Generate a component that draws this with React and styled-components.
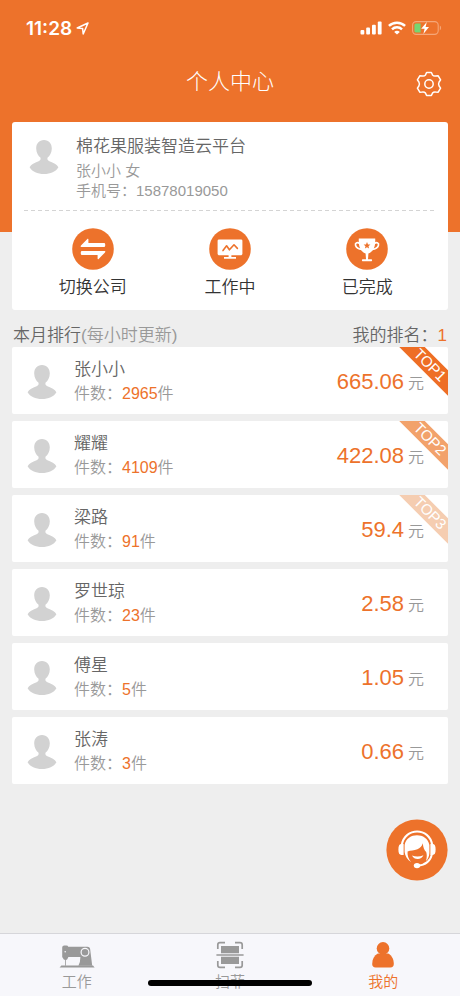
import React from "react";
import styled, { createGlobalStyle } from "styled-components";

const orange = "#ed722b";

const GlobalStyle = createGlobalStyle`
    * {
        box-sizing: border-box;
    }
    body {
        margin: 0;
        background: #eeeeee;
        font-family: "Liberation Sans", "Noto Sans CJK SC", sans-serif;
        font-weight: 350;
    }
    button {
        border: 0;
        padding: 0;
        background: none;
        font: inherit;
        color: inherit;
        cursor: pointer;
    }
    h1, h2, h3, p, ul {
        margin: 0;
        padding: 0;
        font-size: inherit;
        font-weight: inherit;
    }
    svg {
        display: block;
    }
`;

const Page = styled.div`
    display: flex;
    flex-direction: column;
    min-height: 100vh;
`;

const Header = styled.header`
    height: 232px;
    background: ${orange};
    color: #fff;
`;

const StatusBar = styled.div`
    display: flex;
    align-items: center;
    justify-content: space-between;
    height: 56px;
    padding: 0 18px 0 26px;
`;

const StatusGroup = styled.div`
    display: flex;
    align-items: center;
    gap: ${props => props.$gap}px;
`;

const Clock = styled.span`
    font-family: Inter, sans-serif;
    font-size: 19px;
    font-weight: 600;
`;

const TitleBar = styled.div`
    display: grid;
    grid-template-columns: 1fr auto 1fr;
    align-items: center;
    height: 52px;
    padding: 0 18px;
`;

const Title = styled.h1`
    grid-column: 2;
    font-size: 22px;
    font-weight: 300;
    line-height: 32px;
`;

const SettingsButton = styled.button`
    justify-self: end;
    padding-top: 4px;
`;

const Main = styled.main`
    flex: 1;
    margin-top: -110px;
    padding: 0 12px 24px;
`;

const Card = styled.section`
    padding: 13px 12px 10px;
    background: #fff;
    border-radius: 3px;
`;

const Profile = styled.div`
    display: flex;
    gap: 17px;
    padding: 0 5px 9px;

    svg {
        margin-top: 5px;
    }
`;

const Company = styled.h2`
    margin-bottom: 2px;
    font-size: 17px;
    line-height: 24px;
    color: #666;
`;

const Detail = styled.p`
    font-size: 15px;
    line-height: 20px;
    color: #999;
`;

const Divider = styled.div`
    height: 1px;
    background: repeating-linear-gradient(90deg, #d4d4d4 0 4px, transparent 4px 7px);
`;

const Actions = styled.div`
    display: grid;
    grid-template-columns: repeat(3, 1fr);
    padding-top: 17px;
`;

const ActionButton = styled.button`
    display: flex;
    flex-direction: column;
    align-items: center;
    gap: 6px;
    font-size: 17px;
    line-height: 24px;
    color: #333;
`;

const RankHeader = styled.div`
    display: flex;
    justify-content: space-between;
    padding: 15px 1px 0;
    font-size: 17px;
    line-height: 22px;
    color: #666;
`;

const Muted = styled.span`
    color: #999;
`;

const Accent = styled.span`
    color: ${orange};
`;

const RankList = styled.ul`
    display: flex;
    flex-direction: column;
    gap: 7px;
    list-style: none;
`;

const RankRow = styled.li`
    position: relative;
    display: flex;
    align-items: center;
    gap: 17px;
    padding: 11px 24px 8px 15px;
    overflow: hidden;
    background: #fff;
    border-radius: 2px;
`;

const Person = styled.div`
    flex: 1;
    line-height: 24px;
`;

const Name = styled.h3`
    font-size: 17px;
    color: #666;
`;

const Count = styled.p`
    font-size: 16px;
    color: #999;
`;

const Amount = styled.div`
    display: flex;
    align-items: baseline;
    gap: 4px;
    font-size: 16px;
    color: #999;

    strong {
        font-size: 22px;
        font-weight: inherit;
        color: ${orange};
    }
`;

const Ribbon = styled.span`
    position: absolute;
    top: 9px;
    right: -27px;
    width: 90px;
    height: 18px;
    font-size: 15px;
    line-height: 18px;
    text-align: center;
    color: #fff;
    background: ${props => props.color};
    transform: rotate(45deg);
`;

const SupportButton = styled.button`
    position: fixed;
    right: 12px;
    bottom: 115px;
`;

const TabBar = styled.nav`
    position: sticky;
    bottom: 0;
    display: grid;
    grid-template-columns: repeat(3, 1fr);
    padding: 7px 0 4px;
    border-top: 1px solid #d6d6da;
    background: #f7f7fb;
`;

const Tab = styled.a`
    display: flex;
    flex-direction: column;
    align-items: center;
    gap: 3px;
    font-size: 15px;
    line-height: 20px;
    text-decoration: none;
    color: ${props => (props.$active ? orange : "#999")};
`;

const HomeIndicator = styled.div`
    position: absolute;
    bottom: 10px;
    left: 50%;
    width: 164px;
    height: 6px;
    border-radius: 3px;
    background: #000;
    transform: translateX(-50%);
`;

const LocationIcon = () => (
    <svg width="13" height="13" viewBox="0 0 13 13" fill="none" stroke="#fff" strokeWidth="1.5" strokeLinejoin="round">
        <path d="M12 1 L1.2 6 L6.6 6.4 L7.2 12 Z" />
    </svg>
);

const SignalIcon = () => (
    <svg width="22" height="14" viewBox="0 0 22 14" fill="#fff">
        <rect x="0.5" y="9" width="3.8" height="4.5" rx="1" />
        <rect x="6.2" y="6.6" width="3.8" height="6.9" rx="1" />
        <rect x="12" y="3.8" width="3.8" height="9.7" rx="1" />
        <rect x="17.8" y="0.6" width="3.8" height="12.9" rx="1" />
    </svg>
);

const WifiIcon = () => (
    <svg width="18" height="14" viewBox="0 0 18 14" fill="none" stroke="#fff" strokeWidth="2.5">
        <path d="M0.9 4.9 C5.4 0.6 12.6 0.6 17.1 4.9" />
        <path d="M4 8.3 C6.8 5.7 11.2 5.7 14 8.3" />
        <path d="M9 13.6 L6.2 10.9 C7.8 9.5 10.2 9.5 11.8 10.9 Z" fill="#fff" stroke="none" />
    </svg>
);

const BatteryIcon = () => (
    <svg width="30" height="14" viewBox="0 0 30 14">
        <rect x="0.6" y="0.6" width="25.6" height="12.8" rx="3.6" fill="none" stroke="#f5a678" strokeWidth="1.1" />
        <path d="M27.8 4.6 C29.6 5.4 29.6 8.6 27.8 9.4 Z" fill="#f5a678" />
        <path d="M4 2.4 H8.6 V11.6 H4 Q2.4 11.6 2.4 10 V4 Q2.4 2.4 4 2.4 Z" fill="#76d672" />
        <path d="M14.8 1 L9.2 7.8 H12.6 L11.4 13 L17 6 H13.6 Z" fill="#fff" />
    </svg>
);

const GearIcon = () => (
    <svg width="26" height="26" viewBox="0 0 26 26" fill="none" stroke="#fff" strokeWidth="1.5" strokeLinejoin="round">
        <path d="M10.6 1.5 H15.4 L16.5 3.9 Q17.8 5.4 19.6 5 L22.2 4.8 L24.6 8.9 L23.1 11 Q22 13 23.1 15 L24.6 17.1 L22.2 21.2 L19.6 21 Q17.8 20.6 16.5 22.1 L15.4 24.5 H10.6 L9.5 22.1 Q8.2 20.6 6.4 21 L3.8 21.2 L1.4 17.1 L2.9 15 Q4 13 2.9 11 L1.4 8.9 L3.8 4.8 L6.4 5 Q8.2 5.4 9.5 3.9 Z" />
        <circle cx="13" cy="13" r="4.2" />
    </svg>
);

const Avatar = () => (
    <svg width="30" height="34" viewBox="0 0 30 34" fill="#d2d2d2">
        <path d="M15 0 C20 0 22.8 3.6 22.8 8.4 C22.8 12.6 20.6 16 18.6 17.6 C18 19.4 18.6 20.6 20.4 21.2 C24.6 22.6 27.8 24.4 29.4 27.2 C27 31.6 21.4 34 15 34 C8.6 34 3 31.6 0.6 27.2 C2.2 24.4 5.4 22.6 9.6 21.2 C11.4 20.6 12 19.4 11.4 17.6 C9.4 16 7.2 12.6 7.2 8.4 C7.2 3.6 10 0 15 0 Z" />
    </svg>
);

const SwitchIcon = () => (
    <svg width="42" height="42" viewBox="0 0 42 42">
        <circle cx="21" cy="21" r="20.8" fill={orange} />
        <path
            d="M15.6 10.8 Q16.4 10.4 16.4 11.4 V15 H32 Q33.2 15 33.2 16.2 V17.8 Q33.2 19 32 19 H9.4 Q8 18.8 9 17.6 Z M26.4 31.2 Q25.6 31.6 25.6 30.6 V27 H10 Q8.8 27 8.8 25.8 V24.2 Q8.8 23 10 23 H32.6 Q34 23.2 33 24.4 Z"
            fill="#fff"
        />
    </svg>
);

const MonitorIcon = () => (
    <svg width="42" height="42" viewBox="0 0 42 42">
        <circle cx="21" cy="21" r="20.8" fill={orange} />
        <rect x="8.6" y="11.4" width="24.8" height="15.8" rx="1.4" fill="#fff" />
        <path d="M19.6 27 H22.4 V29 H27 V30.8 H15 V29 H19.6 Z" fill="#fff" />
        <path
            d="M14 22.6 L17.6 17.8 L20.4 21.8 L25 16.8 L28.4 20.4"
            fill="none"
            stroke={orange}
            strokeWidth="1.6"
            strokeLinejoin="round"
            strokeLinecap="round"
        />
    </svg>
);

const TrophyIcon = () => (
    <svg width="42" height="42" viewBox="0 0 42 42">
        <circle cx="21" cy="21" r="20.8" fill={orange} />
        <path
            d="M12.8 10.4 H29.2 C29.6 18.4 28 23.4 22.4 25.6 L22 31.2 H25.6 Q26.6 32.2 25.6 33.2 H16.4 Q15.4 32.2 16.4 31.2 H20 L19.6 25.6 C14 23.4 12.4 18.4 12.8 10.4 Z"
            fill="#fff"
        />
        <path
            d="M13.8 15.6 C11 13.8 8.8 15 9.6 17.4 C10.4 20 12.8 21 16 21.4 M28.2 15.6 C31 13.8 33.2 15 32.4 17.4 C31.6 20 29.2 21 26 21.4"
            fill="none"
            stroke="#fff"
            strokeWidth="1.7"
        />
        <path
            d="M21 14 L22 16.4 L24.4 16.6 L22.5 18.2 L23.1 20.6 L21 19.3 L18.9 20.6 L19.5 18.2 L17.6 16.6 L20 16.4 Z"
            fill={orange}
        />
    </svg>
);

const HeadsetIcon = () => (
    <svg width="62" height="62" viewBox="0 0 62 62">
        <circle cx="31" cy="31" r="30.6" fill={orange} />
        <path d="M15.8 26 C18.6 8 43.6 8 46.2 26" fill="none" stroke="#fff" strokeWidth="2" />
        <path
            d="M18.6 26 C20.8 13 41.2 13 43.4 26 V34 C43.2 37.4 42 40.2 40 42 C41 38.4 41 35.4 40.2 33 C38.2 31.2 37.2 28.4 36.8 24.2 C35.8 27.4 34 29.2 31.4 30.2 C28 31.4 24.4 31.4 21.6 32.4 C21.2 36 22.4 39.6 25 43 C21.2 40.6 19 36.8 18.6 33 Z"
            fill="#fff"
        />
        <path d="M17.6 25 V36 H15.4 C13.4 36 12.4 34.4 12.4 30.6 C12.4 26.8 13.4 25 15.4 25 Z" fill="#fff" />
        <path d="M44.4 25 V36 H46.6 C48.6 36 49.6 34.4 49.6 30.6 C49.6 26.8 48.6 25 46.6 25 Z" fill="#fff" />
        <path d="M46 35 C44.6 42 39.6 46 31.6 46.6" fill="none" stroke="#fff" strokeWidth="1.8" />
        <ellipse cx="31" cy="46.6" rx="3.2" ry="2.6" fill="#fff" />
        <path d="M26 36.4 C29.4 37.8 33.8 37.8 37.4 36.2 C35.8 41 28 41.2 26 36.4 Z" fill="#fff" />
    </svg>
);

const SewingIcon = () => (
    <svg width="36" height="28" viewBox="0 0 36 28">
        <g fill="#999">
            <path d="M3.2 6.4 Q3.2 4.4 5.2 4.4 H7.4 Q9 4.4 9.2 5.8 H28.4 Q31 5.8 31.2 8.4 L33.2 24.8 H19.4 Q21.4 21.4 21.4 16 H9.4 L8 18.8 H7 V24.8 H6.2 V18.8 H5 L3.2 16 Z" />
            <path d="M2.4 24.6 H34 L35.6 26.6 H0.6 Z" />
        </g>
        <circle cx="6.2" cy="10.8" r="0.8" fill="#f7f7fb" />
        <circle cx="26" cy="11.2" r="3.9" fill="#999" stroke="#f7f7fb" strokeWidth="1.2" />
    </svg>
);

const ScanIcon = () => (
    <svg width="28" height="28" viewBox="0 0 28 28">
        <path
            d="M1.8 8 V3.8 Q1.8 1.6 4 1.6 H9 M19 1.6 H24 Q26.2 1.6 26.2 3.8 V8 M26.2 20 V24.2 Q26.2 26.4 24 26.4 H19 M9 26.4 H4 Q1.8 26.4 1.8 24.2 V20 M0.4 14 H27.6"
            fill="none"
            stroke="#999"
            strokeWidth="1.7"
        />
        <path d="M5 5 H23 V12.2 H5 Z M5 15.8 H23 V23 H5 Z" fill="#999" />
    </svg>
);

const UserIcon = () => (
    <svg width="28" height="28" viewBox="0 0 28 28" fill={orange}>
        <circle cx="14" cy="7.4" r="6.3" />
        <path d="M8.8 12.6 H19.2 C22.8 14.6 24.8 18.4 24.8 23 Q24.8 26.4 21.4 26.4 H6.6 Q3.2 26.4 3.2 23 C3.2 18.4 5.2 14.6 8.8 12.6 Z" />
    </svg>
);

const actions = [
    { label: "切换公司", Icon: SwitchIcon },
    { label: "工作中", Icon: MonitorIcon },
    { label: "已完成", Icon: TrophyIcon }
];

const ranking = [
    { name: "张小小", count: 2965, amount: "665.06" },
    { name: "耀耀", count: 4109, amount: "422.08" },
    { name: "梁路", count: 91, amount: "59.4" },
    { name: "罗世琼", count: 23, amount: "2.58" },
    { name: "傅星", count: 5, amount: "1.05" },
    { name: "张涛", count: 3, amount: "0.66" }
];

const ribbonColors = ["#ee6e25", "#f2a26b", "#f5cdb1"];

const tabs = [
    { label: "工作", Icon: SewingIcon, href: "#work" },
    { label: "扫菲", Icon: ScanIcon, href: "#scan" },
    { label: "我的", Icon: UserIcon, href: "#mine", active: true }
];

const RankItem = props => {
    const { person, index } = props;
    return (
        <RankRow>
            <Avatar />
            <Person>
                <Name>{person.name}</Name>
                <Count>
                    件数：<Accent>{person.count}</Accent>件
                </Count>
            </Person>
            <Amount>
                <strong>{person.amount}</strong>元
            </Amount>
            {ribbonColors[index] && (
                <Ribbon color={ribbonColors[index]}>TOP{index + 1}</Ribbon>
            )}
        </RankRow>
    );
};

const App = () => (
    <Page>
        <GlobalStyle />
        <Header>
            <StatusBar>
                <StatusGroup $gap={4}>
                    <Clock>11:28</Clock>
                    <LocationIcon />
                </StatusGroup>
                <StatusGroup $gap={6}>
                    <SignalIcon />
                    <WifiIcon />
                    <BatteryIcon />
                </StatusGroup>
            </StatusBar>
            <TitleBar>
                <Title>个人中心</Title>
                <SettingsButton aria-label="设置">
                    <GearIcon />
                </SettingsButton>
            </TitleBar>
        </Header>
        <Main>
            <Card>
                <Profile>
                    <Avatar />
                    <div>
                        <Company>棉花果服装智造云平台</Company>
                        <Detail>张小小 女</Detail>
                        <Detail>手机号：15878019050</Detail>
                    </div>
                </Profile>
                <Divider />
                <Actions>
                    {actions.map(({ label, Icon }) => (
                        <ActionButton key={label}>
                            <Icon />
                            {label}
                        </ActionButton>
                    ))}
                </Actions>
            </Card>
            <RankHeader>
                <h2>
                    本月排行<Muted>(每小时更新)</Muted>
                </h2>
                <span>
                    我的排名：<Accent>1</Accent>
                </span>
            </RankHeader>
            <RankList>
                {ranking.map((person, index) => (
                    <RankItem key={person.name} person={person} index={index} />
                ))}
            </RankList>
        </Main>
        <SupportButton aria-label="客服">
            <HeadsetIcon />
        </SupportButton>
        <TabBar>
            {tabs.map(({ label, Icon, href, active }) => (
                <Tab key={label} href={href} $active={active}>
                    <Icon />
                    {label}
                </Tab>
            ))}
            <HomeIndicator />
        </TabBar>
    </Page>
);

export default App;
